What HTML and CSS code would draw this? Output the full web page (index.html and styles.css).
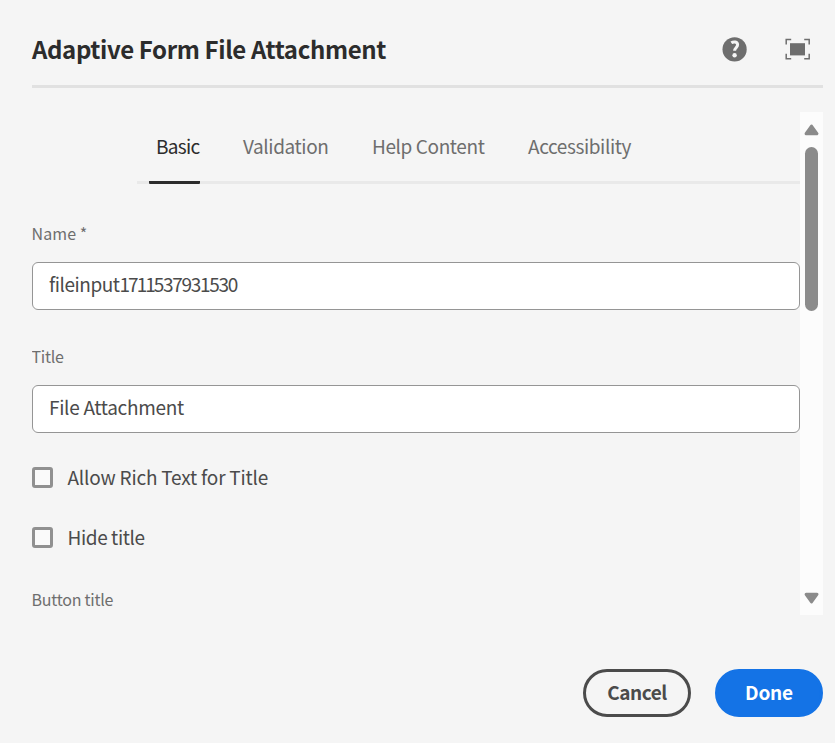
FILE: index.html
```html
<!DOCTYPE html>
<html lang="en">
<head>
<meta charset="utf-8">
<title>Adaptive Form File Attachment</title>
<link rel="stylesheet" href="styles.css">
</head>
<body>
<main class="dialog">
  <header class="header">
    <h1 class="heading">Adaptive Form File Attachment</h1>
    <div class="actions">
      <svg class="help" width="26" height="26" viewBox="0 0 26 26"><circle cx="12.600" cy="13.400" r="12.100" fill="#6e6e6e"/><path d="M9.300 6.800C11.600 5.300 15.600 5.500 15.600 8.800c0 2.700-3 3.100-3 5.900" fill="none" stroke="#f5f5f5" stroke-width="3"/><circle cx="12.600" cy="19.200" r="2.200" fill="#f5f5f5"/></svg>
      <svg class="expand" width="26" height="22" viewBox="0 0 26 22"><path d="M1.200 6.500V1.500h5M19.200 1.500h5v5M24.200 15.700v5h-5M6.200 20.700h-5v-5" fill="none" stroke="#6e6e6e" stroke-width="1.500"/><path d="M5 5.200h15v12.200H5z" fill="#6e6e6e"/></svg>
    </div>
  </header>
  <div class="body">
    <div class="content">
      <nav class="tabs">
        <a class="tab active">Basic</a>
        <a class="tab validation">Validation</a>
        <a class="tab help-content">Help Content</a>
        <a class="tab accessibility">Accessibility</a>
      </nav>
      <label class="label label-name">Name *</label>
      <div class="field field-name">fileinput<span class="digits-tight">1711</span><span class="digits">537931530</span></div>
      <label class="label label-title">Title</label>
      <div class="field field-title">File Attachment</div>
      <div class="check"><span class="box"></span><span class="check-text rich">Allow Rich Text for Title</span></div>
      <div class="check"><span class="box"></span><span class="check-text hide">Hide title</span></div>
      <label class="label label-button">Button title</label>
    </div>
    <div class="scrollbar">
      <svg width="15" height="12" viewBox="0 0 15 12"><path d="M7.500 2 12.900 9.700H2.100z" fill="#8b8b8b" stroke="#8b8b8b" stroke-width="3" stroke-linejoin="round"/></svg>
      <div class="thumb"></div>
      <svg class="down" width="15" height="12" viewBox="0 0 15 12"><path d="M7.500 10 12.900 2.300H2.100z" fill="#8b8b8b" stroke="#8b8b8b" stroke-width="3" stroke-linejoin="round"/></svg>
    </div>
  </div>
  <footer class="footer">
    <button class="button cancel">Cancel</button>
    <button class="button done">Done</button>
  </footer>
</main>
</body>
</html>
```
FILE: styles.css
```css
* { box-sizing: border-box; }
body {
  margin: 0;
  background: #f5f5f5;
  font-family: "Noto Sans CJK SC", "Noto Sans", sans-serif;
  color: #4b4b4b;
}
.dialog {
  width: 835px;
  height: 743px;
  padding: 0 12px 0 32px;
  overflow: hidden;
}
.header {
  display: flex;
  justify-content: space-between;
  height: 88px;
  border-bottom: 3px solid #e1e1e1;
}
.heading {
  margin: 33px 0 0;
  font-size: 24px;
  line-height: 32px;
  font-weight: 700;
  letter-spacing: -0.38px;
  color: #2c2c2c;
  white-space: nowrap;
}
.actions { display: flex; gap: 37px; padding: 36px 12px 0 0; }
.expand { margin-top: 2px; }
.body { display: flex; height: 503px; margin-top: 24px; }
.content { width: 768px; overflow: hidden; }
.tabs {
  display: flex;
  gap: 43.6px;
  height: 72px;
  margin-left: 105px;
  padding-left: 12px;
  border-bottom: 3px solid #e9e9e9;
}
.tab {
  height: 72px;
  padding-top: 19px;
  font-size: 19px;
  line-height: 30px;
  letter-spacing: -0.4px;
  color: #6e6e6e;
  white-space: nowrap;
}
.tab.active {
  width: 51px;
  margin-right: -0.6px;
  padding-left: 7px;
  letter-spacing: -0.7px;
  color: #2c2c2c;
  border-bottom: 3px solid #2c2c2c;
  border-radius: 1px;
}
.label {
  display: block;
  height: 24px;
  margin-left: -0.5px;
  font-size: 16px;
  line-height: 24px;
  letter-spacing: -0.25px;
  color: #6e6e6e;
}
.label-name { margin-top: 37px; letter-spacing: 0.1px; }
.label-title { margin-top: 34px; }
.label-button { margin-top: 35px; }
.field {
  height: 48px;
  margin-top: 17px;
  padding-left: 16px;
  border: 1px solid #959595;
  border-radius: 6px;
  background: #fff;
  font-size: 19px;
  line-height: 42px;
  letter-spacing: -0.3px;
}
.field-name { letter-spacing: -0.45px; }
.digits-tight { letter-spacing: -2px; }
.digits { letter-spacing: -1.3px; }
.check {
  display: flex;
  align-items: center;
  gap: 14.5px;
  height: 30px;
  margin-top: 30px;
}
.field + .check { margin-top: 29px; }
.box {
  width: 21px;
  height: 21px;
  border: 3px solid #909090;
  border-radius: 3px;
  background: #fafafa;
}
.check-text { font-size: 19px; line-height: 30px; letter-spacing: -0.2px; }
.hide { letter-spacing: -0.4px; }
.scrollbar {
  display: flex;
  flex-direction: column;
  align-items: center;
  width: 23px;
  padding: 12px 0 11px;
  background: #fcfcfc;
}
.thumb { width: 13px; height: 164px; margin-top: 11px; border-radius: 7px; background: #8b8b8b; }
.down { margin-top: auto; }
.footer { display: flex; justify-content: flex-end; gap: 24px; margin-top: 54px; }
.button {
  width: 108px;
  height: 48px;
  padding: 0 0 2px;
  border: 3px solid #4b4b4b;
  border-radius: 24px;
  background: transparent;
  color: #4b4b4b;
  font: 700 19px/40px "Noto Sans CJK SC", sans-serif;
  letter-spacing: -0.5px;
}
.done { border-color: #1473e6; background: #1473e6; color: #fff; letter-spacing: -0.2px; }
```
